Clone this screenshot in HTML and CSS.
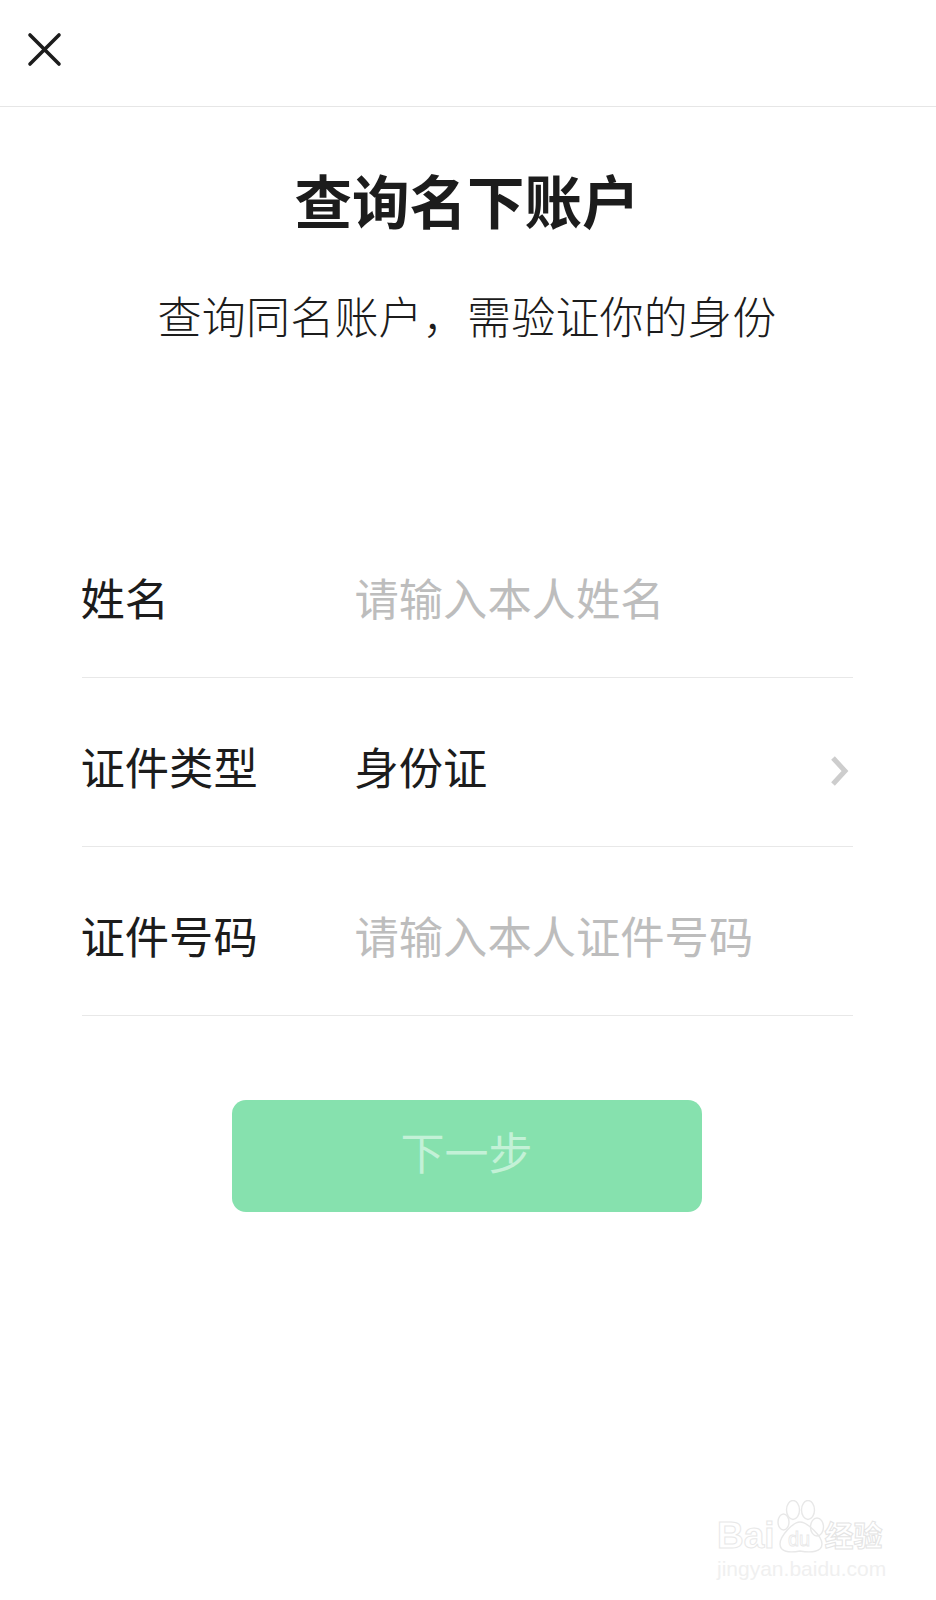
FILE: index.html
```html
<!DOCTYPE html>
<html lang="zh-CN">
<head>
    <meta charset="UTF-8">
    <meta name="viewport" content="width=device-width, initial-scale=1.0">
    <title>查询名下账户</title>
    <link rel="stylesheet" href="styles.css">
</head>
<body>
    <header class="top-bar">
        <svg class="close-icon" width="36" height="36" viewBox="0 0 36 36">
            <path d="M3 3L32 32M32 3L3 32" stroke="#1c1c1c" stroke-width="3.6" stroke-linecap="round" fill="none"/>
        </svg>
    </header>

    <main class="content">
        <h1 class="title">查询名下账户</h1>
        <p class="subtitle">查询同名账户，需验证你的身份</p>

        <div class="form">
            <div class="row">
                <span class="label">姓名</span>
                <span class="placeholder">请输入本人姓名</span>
            </div>
            <div class="row">
                <span class="label">证件类型</span>
                <span class="value">身份证</span>
                <svg class="chevron" width="22" height="34" viewBox="0 0 22 34">
                    <path d="M4 4L16 17L4 30" stroke="#cdcdcd" stroke-width="5" fill="none"/>
                </svg>
            </div>
            <div class="row">
                <span class="label">证件号码</span>
                <span class="placeholder">请输入本人证件号码</span>
            </div>
        </div>

        <button class="next-btn">下一步</button>
    </main>

    <div class="watermark">
        <div class="wm-logo">
            <span class="wm-latin">Bai</span>
            <svg class="wm-paw" width="48" height="54" viewBox="0 0 48 54" fill="none" stroke="#e8e8e8" stroke-width="1.4">
                <ellipse cx="16" cy="10" rx="6.5" ry="9.5"/>
                <ellipse cx="31" cy="10" rx="6.5" ry="9.5"/>
                <ellipse cx="6.5" cy="22" rx="5.5" ry="8"/>
                <ellipse cx="40" cy="27" rx="6.5" ry="9"/>
                <path d="M23 22C16 22 3 36 3 44C3 52 12 53 23 51C34 53 45 52 45 44C45 36 30 22 23 22Z"/>
                <text class="wm-du" x="11" y="46">du</text>
            </svg>
            <span class="wm-cn">经验</span>
        </div>
        <div class="wm-url">jingyan.baidu.com</div>
    </div>
</body>
</html>
```

FILE: styles.css
```css
body {
    margin: 0;
    height: 1600px;
    position: relative;
    overflow: hidden;
    background-color: #fff;
    font-family: "Liberation Sans", "Noto Sans CJK SC", sans-serif;
    color: #1c1c1c;
}

.top-bar {
    height: 107px;
    box-sizing: border-box;
    padding: 32px 0 0 27px;
    border-bottom: 1px solid #e6e6e6;
}

.close-icon {
    display: block;
}

.content {
    display: flex;
    flex-direction: column;
    align-items: center;
    padding-right: 2px;
}

.title {
    margin: 59px 0 0;
    font-size: 57.5px;
    line-height: 76px;
    font-weight: 700;
}

.subtitle {
    margin: 47px 0 0;
    font-size: 44px;
    line-height: 60px;
    font-weight: 300;
    letter-spacing: 0.2px;
}

.form {
    width: 771px;
    margin-top: 160px;
}

.row {
    height: 169px;
    box-sizing: border-box;
    display: flex;
    align-items: center;
    padding-top: 8px;
    border-bottom: 1px solid #e8e8e8;
    font-size: 44.3px;
}

.label {
    width: 274px;
    margin-left: -1px;
}

.value {
    flex: 1;
}

.placeholder {
    color: #bdbdbd;
}

.chevron {
    margin-top: 10px;
    margin-right: 2px;
}

.next-btn {
    width: 470px;
    height: 112px;
    margin-top: 84px;
    margin-right: 1px;
    padding-bottom: 12px;
    border: none;
    border-radius: 14px;
    background-color: #86e1ae;
    color: #c3f1d7;
    font-family: inherit;
    font-size: 44px;
}

.watermark {
    position: absolute;
    left: 717px;
    top: 1500px;
}

.wm-logo {
    display: flex;
    align-items: flex-end;
}

.wm-latin {
    font-size: 37px;
    line-height: 36px;
    margin-right: 2px;
    font-weight: 700;
    color: #fff;
    -webkit-text-stroke: 1px #e8e8e8;
}

.wm-du {
    font-size: 20px;
    stroke-width: 0.8;
}

.wm-cn {
    font-size: 29px;
    line-height: 34px;
    font-weight: 700;
    color: #fff;
    -webkit-text-stroke: 1px #e4e4e4;
}

.wm-url {
    margin-top: 2px;
    font-size: 21px;
    line-height: 26px;
    color: #f0f0f0;
}
```
